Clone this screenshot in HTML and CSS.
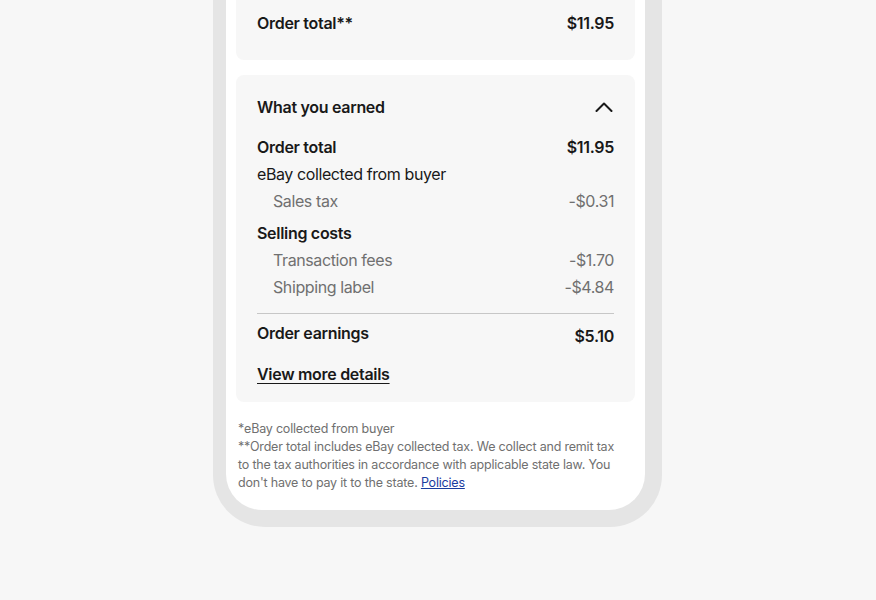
FILE: index.html
```html
<!DOCTYPE html>
<html lang="en">
<head>
<meta charset="utf-8">
<title>What you earned</title>
<link rel="stylesheet" href="styles.css">
</head>
<body>
<div class="phone">
  <div class="screen">
    <section class="card card-total">
      <div class="row bold"><span>Order total**</span><span>$11.95</span></div>
    </section>
    <section class="card card-earned">
      <div class="header">
        <span class="title">What you earned</span>
        <svg class="chevron" width="18" height="10" viewBox="0 0 18 10" aria-hidden="true"><path d="M1.5 9 L9 1.5 L16.5 9" fill="none" stroke="#191919" stroke-width="2" stroke-linecap="round" stroke-linejoin="round"/></svg>
      </div>
      <div class="lines">
        <div class="group">
          <div class="row bold"><span>Order total</span><span>$11.95</span></div>
          <div class="row"><span>eBay collected from buyer</span></div>
          <div class="row sub"><span>Sales tax</span><span>-$0.31</span></div>
        </div>
        <div class="group">
          <div class="row bold"><span>Selling costs</span></div>
          <div class="row sub"><span>Transaction fees</span><span>-$1.70</span></div>
          <div class="row sub"><span>Shipping label</span><span>-$4.84</span></div>
        </div>
      </div>
      <div class="divider"></div>
      <div class="row bold earnings"><span>Order earnings</span><span class="value">$5.10</span></div>
      <a class="more" href="#">View more details</a>
    </section>
    <div class="notes">
      <p>*eBay collected from buyer</p>
      <p>**Order total includes eBay collected tax. We collect and remit tax to the tax authorities in accordance with applicable state law. You don't have to pay it to the state. <a href="#">Policies</a></p>
    </div>
  </div>
</div>
</body>
</html>
```
FILE: styles.css
```css
* { box-sizing: border-box; }
html, body { margin: 0; padding: 0; }
body {
  background: #f7f7f7;
  font-family: Inter, "Open Sans", "Liberation Sans", sans-serif;
  color: #191919;
  width: 876px;
  height: 600px;
  overflow: hidden;
}
.phone {
  width: 449px;
  margin: -40px 0 0 213px;
  background: #e5e5e5;
  border-radius: 0 0 52px 52px;
  padding: 0 17px 17px 13px;
}
.screen {
  background: #fff;
  border-radius: 0 0 36px 36px;
  padding: 31px 10px 18px 10px;
}
.card {
  background: #f7f7f7;
  border-radius: 8px;
  padding: 0 21px 0 21px;
}
.card-total {
  padding-top: 20px;
  padding-bottom: 22px;
}
.card-earned {
  margin-top: 15px;
  padding-top: 20px;
  padding-bottom: 16px;
}
.row {
  display: flex;
  justify-content: space-between;
  align-items: flex-start;
  font-size: 16px;
  line-height: 24px;
  height: 27px;
  letter-spacing: -0.4px;
}
.bold { font-weight: 600; letter-spacing: -0.3px; }
.header {
  display: flex;
  justify-content: space-between;
  align-items: center;
  height: 24px;
}
.title { font-size: 16px; font-weight: 600; line-height: 24px; letter-spacing: -0.3px; }
.chevron { margin-right: 1px; }
.lines { margin-top: 16px; }
.group + .group { margin-top: 5px; }
.sub { color: #707070; padding-left: 16px; }
.divider {
  height: 1px;
  background: #c7c7c7;
  margin-top: 11px;
}
.earnings { margin-top: 7px; height: 30px; }
.earnings .value { margin-top: 3px; }
.more {
  display: block;
  margin-top: 11px;
  font-size: 16px;
  line-height: 24px;
  font-weight: 600;
  letter-spacing: -0.3px;
  color: #191919;
  text-decoration: underline;
  text-underline-offset: 3px;
}
.notes {
  margin-top: 18px;
  padding: 0 14px 0 2px;
  font-size: 12.5px;
  line-height: 18px;
  letter-spacing: -0.2px;
  color: #707070;
}
.notes p { margin: 0; }
.notes a { color: #1a3c9f; text-decoration: underline; }
```
